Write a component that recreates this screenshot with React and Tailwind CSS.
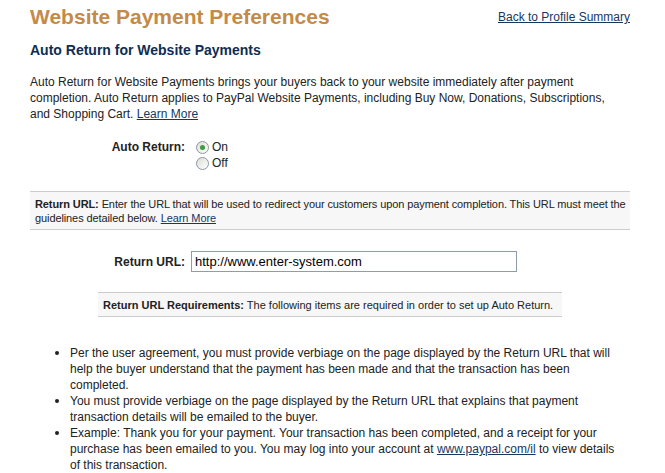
import React from 'react';

function Radio({ checked, label }) {
  return (
    <label className="flex items-center h-[16px]">
      <span className="w-[13px] h-[13px] rounded-full border border-[#8c97a3] bg-gradient-to-br from-[#dcdcd6] to-white flex items-center justify-center shrink-0">
        {checked && <span className="w-[5px] h-[5px] rounded-full bg-[#3f9b3f]" />}
      </span>
      <span className="ml-[3px] text-[12px] leading-[16px] text-[#222]">{label}</span>
    </label>
  );
}

function Bullet({ children }) {
  return (
    <li className="flex">
      <span className="w-[40px] shrink-0 flex justify-end pr-[11px] pt-[6px]">
        <span className="w-[4px] h-[4px] rounded-full bg-[#222]" />
      </span>
      <span className="whitespace-nowrap">{children}</span>
    </li>
  );
}

export default function App() {
  const link = 'text-[#17375e] underline';

  return (
    <div className="w-[665px] h-[473px] overflow-hidden bg-white font-['Liberation_Sans',Arial,sans-serif] text-[#222]">
      <div className="ml-[30px] w-[600px] pt-[5px]">
        {/* Header */}
        <div className="flex justify-between items-center h-[24px]">
          <h1 className="text-[21px] leading-[24px] font-bold text-[#c48a48]">Website Payment Preferences</h1>
          <a className={`text-[12px] leading-[16px] ${link}`}>Back to Profile Summary</a>
        </div>

        <h2 className="mt-[12px] text-[14px] leading-[18px] font-bold text-[#0f2d52]">
          Auto Return for Website Payments
        </h2>

        <p className="mt-[15px] text-[12px] leading-[16px] whitespace-nowrap">
          Auto Return for Website Payments brings your buyers back to your website immediately after payment
          <br />
          completion. Auto Return applies to PayPal Website Payments, including Buy Now, Donations, Subscriptions,
          <br />
          and Shopping Cart. <a className={link}>Learn More</a>
        </p>

        {/* Auto Return radios */}
        <div className="mt-[17px] flex">
          <div className="w-[155px] text-right text-[12px] leading-[16px] font-bold">Auto Return:</div>
          <div className="ml-[11px] flex flex-col">
            <Radio checked label="On" />
            <Radio label="Off" />
          </div>
        </div>

        {/* Return URL info box */}
        <div className="mt-[20px] border-y border-[#cccccc] bg-[#f7f7f7] px-[5px] pt-[5px] pb-[4px] text-[11px] leading-[14px] whitespace-nowrap tracking-[-0.1px]">
          <b>Return URL:</b> Enter the URL that will be used to redirect your customers upon payment completion. This URL must meet the
          <br />
          guidelines detailed below. <a className={link}>Learn More</a>
        </div>

        {/* Return URL input */}
        <div className="mt-[21px] flex items-center">
          <div className="w-[155px] text-right text-[12px] leading-[16px] font-bold">Return URL:</div>
          <input
            className="ml-[6px] w-[326px] h-[21px] border border-[#8f9cab] px-[3px] text-[13px] text-black outline-none"
            defaultValue="http://www.enter-system.com"
          />
        </div>

        {/* Requirements box */}
        <div className="mt-[20px] ml-[68px] w-[464px] border-y border-[#cccccc] bg-[#f7f7f7] px-[5px] pt-[5px] pb-[4px] text-[11px] leading-[14px] whitespace-nowrap">
          <b>Return URL Requirements:</b> The following items are required in order to set up Auto Return.
        </div>

        {/* Requirement list */}
        <ul className="mt-[28px] text-[12px] leading-[16px]">
          <Bullet>
            Per the user agreement, you must provide verbiage on the page displayed by the Return URL that will
            <br />
            help the buyer understand that the payment has been made and that the transaction has been
            <br />
            completed.
          </Bullet>
          <Bullet>
            You must provide verbiage on the page displayed by the Return URL that explains that payment
            <br />
            transaction details will be emailed to the buyer.
          </Bullet>
          <Bullet>
            Example: Thank you for your payment. Your transaction has been completed, and a receipt for your
            <br />
            purchase has been emailed to you. You may log into your account at <a className={link}>www.paypal.com/il</a> to view details
            <br />
            of this transaction.
          </Bullet>
        </ul>
      </div>
    </div>
  );
}
